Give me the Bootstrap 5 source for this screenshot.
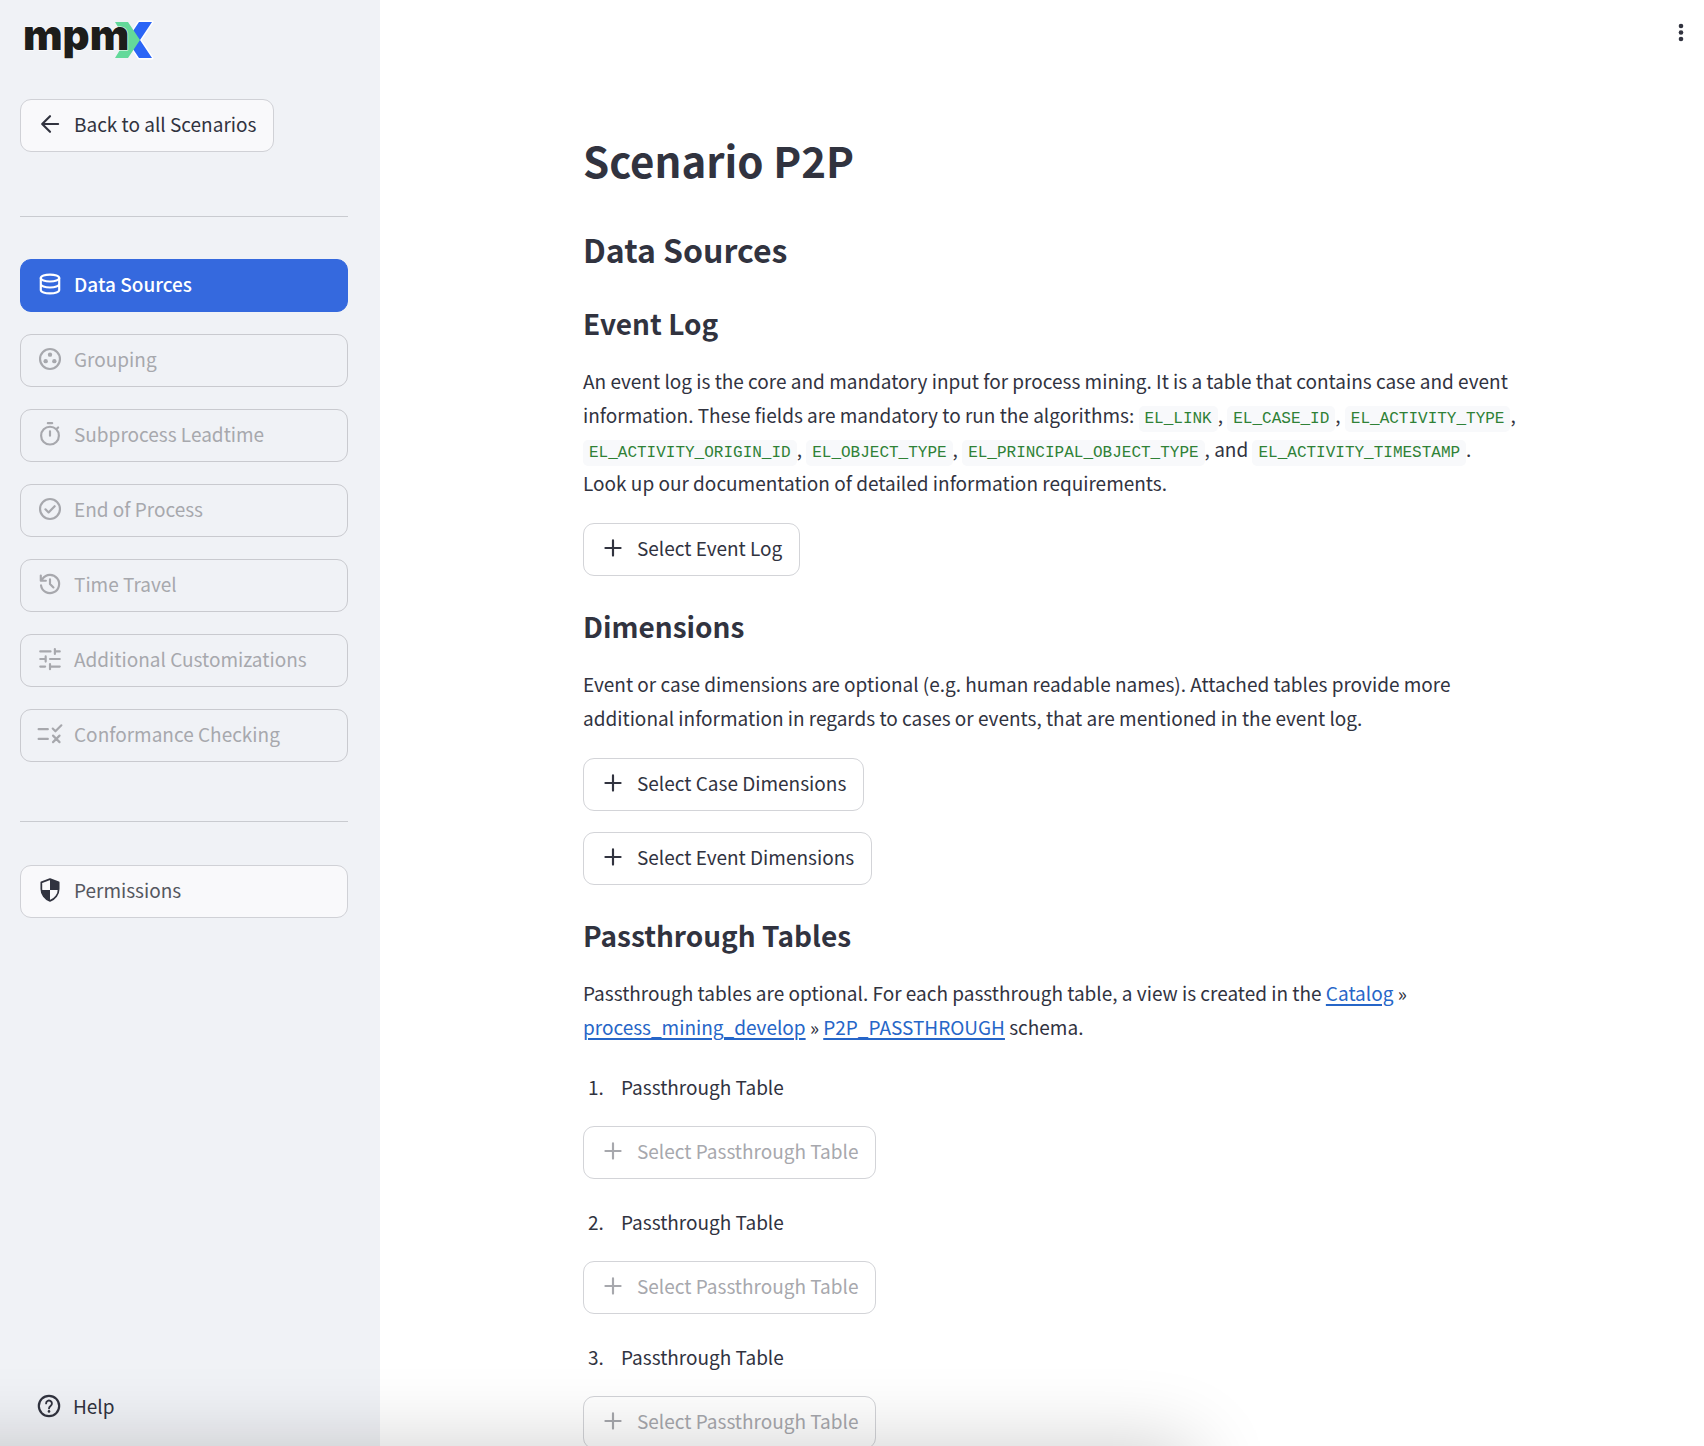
<!DOCTYPE html>
<html lang="en">
<head>
<meta charset="utf-8">
<meta name="viewport" content="width=device-width, initial-scale=1">
<title>mpmX – Scenario P2P</title>
<link href="https://cdn.jsdelivr.net/npm/bootstrap@5.3.0/dist/css/bootstrap.min.css" rel="stylesheet">
<style>
  :root { --ink: #31333f; --muted: #a7a8ad; --line: #d3d4d8; --side: #f0f2f6; }
  body { font-family: "Noto Sans CJK SC", "Noto Sans", sans-serif; font-size: 19px; line-height: 34px; color: var(--ink); }
  .side-panel { width: 380px; background: var(--side); padding: 18px 32px 23px 20px; }
  .logo { margin-bottom: 37px; overflow: visible; }
  .logo text { font: 900 42px Inter, sans-serif; fill: #1d1d1b; }
  .side-rule { border: 0; border-top: 1px solid #c9cbd0; opacity: 1; margin: 0; }
  .rule-top { margin-top: 64px; }
  .rule-bottom { margin-bottom: 43px; }
  .steps { gap: 22px; margin: 42px 0 59px; }
  .tool-btn {
    --bs-btn-color: var(--ink); --bs-btn-bg: #fff; --bs-btn-border-color: var(--line);
    --bs-btn-hover-color: #3569de; --bs-btn-hover-bg: #fff; --bs-btn-hover-border-color: #3569de;
    --bs-btn-disabled-color: var(--muted); --bs-btn-disabled-bg: transparent; --bs-btn-disabled-border-color: var(--line);
    --bs-btn-disabled-opacity: 1; --bs-btn-border-radius: 11px;
    --bs-btn-font-size: 19px; --bs-btn-line-height: 28px;
    display: flex; align-items: center; gap: 11px; height: 53px; padding: 0 17px 3px 16px; text-align: left;
  }
  .side-panel .tool-btn { --bs-btn-bg: #f9f9fb; --bs-btn-border-color: #d0d1d6; --bs-btn-disabled-border-color: #c9cacf; }
  .side-panel .tool-btn.current { --bs-btn-color: #fff; --bs-btn-bg: #3569de; --bs-btn-border-color: #3569de; font-weight: 500; }
  .side-panel .tool-btn.faded { --bs-btn-color: #55575f; }
  .faded svg { color: var(--ink); }
  .ico { width: 26px; height: 26px; flex: none; fill: none; stroke: currentColor; stroke-width: 2; stroke-linecap: round; stroke-linejoin: round; }
  .solid { fill: currentColor; stroke: none; }
  .help-link { gap: 11px; padding-left: 16px; color: var(--ink); }
  .content-pane { overflow-y: auto; scrollbar-width: none; padding: 132px 0 60px 203px; }
  .content-pane::-webkit-scrollbar { display: none; }
  .content-body { max-width: 944px; }
  h1, h2, h3 { font-weight: 600; color: var(--ink); margin: 0; }
  h1 { font-size: 42px; line-height: 56px; }
  h2 { font-size: 32px; line-height: 42px; margin-top: 40px; }
  h3 { font-size: 28px; line-height: 36px; margin: 32px 0 23px; }
  h2 + h3 { margin-top: 35px; }
  p { margin-bottom: 23px; }
  code { font-family: "Liberation Mono", monospace; font-size: 16px; line-height: 1; color: #2f8136; background: #f8f9fb; border-radius: 5px; padding: 4px 6px; }
  .content-body a { color: #2666c8; text-decoration-thickness: 2px; text-underline-offset: 3px; }
  .stack { gap: 21px; }
  .passthrough { padding-left: 25px; margin: 26px 0 22px; }
  .passthrough li { padding-left: 13px; }
  .menu-btn { top: 18px; right: 9px; width: 28px; height: 28px; color: var(--ink); }
  .edge-shade { left: 0; top: 100%; width: 70vw; height: 200px; margin-left: -100px; padding-right: 100px; box-sizing: content-box; box-shadow: 0 0 80px rgba(0,0,0,.2); pointer-events: none; }
</style>
<script src="https://cdn.jsdelivr.net/npm/bootstrap@5.3.0/dist/js/bootstrap.bundle.min.js" defer></script>
</head>
<body>
<svg class="d-none">
  <symbol id="plus" viewBox="0 0 24 24"><path d="M12 5v14M5 12h14"/></symbol>
</svg>
<div class="d-flex vh-100 overflow-hidden">
  <aside class="side-panel d-flex flex-column flex-shrink-0">
    <svg class="logo flex-shrink-0" width="140" height="44" viewBox="20 18 140 44" role="img" aria-label="mpmX">
      <g stroke="#fff" stroke-width="3" stroke-linejoin="round" paint-order="stroke">
        <path fill="#2b65f6" d="M139 22h13l-12 18 12 18h-13l-10-15v-6z"/>
        <path fill="#63d99a" stroke="none" d="M115 22h13l12 18-12 18h-13l11-18z"/>
        <text x="23" y="50" stroke-width="1">mpm</text>
      </g>
    </svg>
    <button type="button" class="btn tool-btn align-self-start">
      <svg class="ico" viewBox="0 0 24 24"><path d="M19.500 12H5M12 4.800L4.800 12l7.200 7.200"/></svg>Back to all Scenarios
    </button>
    <hr class="side-rule rule-top">
    <nav class="steps d-flex flex-column" aria-label="Scenario steps">
      <button type="button" class="btn tool-btn current"><svg class="ico" viewBox="0 0 24 24"><ellipse cx="12" cy="6.500" rx="8.500" ry="3.200"/><path d="M3.500 6.500v11c0 1.800 3.800 3.200 8.500 3.200s8.500-1.400 8.500-3.200v-11M3.500 12c0 1.800 3.800 3.200 8.500 3.200s8.500-1.400 8.500-3.200"/></svg>Data Sources</button>
      <button type="button" class="btn tool-btn" disabled><svg class="ico" viewBox="0 0 24 24"><circle cx="12" cy="12" r="9.200"/><g class="solid"><circle cx="12" cy="8" r="2"/><circle cx="8" cy="14" r="2"/><circle cx="16" cy="14" r="2"/></g></svg>Grouping</button>
      <button type="button" class="btn tool-btn" disabled><svg class="ico" viewBox="0 0 24 24"><circle cx="12" cy="13.500" r="8.200"/><path d="M10 2h4M12 9.500v4M18.500 7l1-1"/></svg>Subprocess Leadtime</button>
      <button type="button" class="btn tool-btn" disabled><svg class="ico" viewBox="0 0 24 24"><circle cx="12" cy="12" r="9.200"/><path d="M7.800 12.300l2.900 2.900 5.600-5.800"/></svg>End of Process</button>
      <button type="button" class="btn tool-btn" disabled><svg class="ico" viewBox="0 0 24 24"><path d="M3.700 13.200a8.400 8.400 0 1 0 1.500-6.100L3.800 8.800M3.500 4.200v4.800h4.700M12 7.800V12l3.200 3.200"/></svg>Time Travel</button>
      <button type="button" class="btn tool-btn" disabled><svg class="ico" viewBox="0 0 24 24"><path d="M3 5h9.500M16.500 2.800v4.600M16.500 5H21M3 12h5M8 9.600v4.800M12 12h9M3 19h4.500M12 16.600v4.800M12 19h9"/></svg>Additional Customizations</button>
      <button type="button" class="btn tool-btn" disabled><svg class="ico" viewBox="0 0 24 24"><path d="M1.500 7.500h8.500M1.500 16.500h8.500M14.500 7l2.500 2.500 5.500-5.500M14.800 13.500l6 6M20.800 13.500l-6 6"/></svg>Conformance Checking</button>
    </nav>
    <hr class="side-rule rule-bottom">
    <button type="button" class="btn tool-btn faded"><svg class="ico" viewBox="0 0 24 24"><path d="M12 2l8 3v6c0 5-3.300 9.600-8 11-4.700-1.400-8-6-8-11V5z" stroke-width="1.600"/><path class="solid" d="M12 2l8 3v7h-8zM4 12h8v10c-4.300-1.300-7.500-5.400-8-10z"/></svg>Permissions</button>
    <a href="#help" class="help-link d-flex align-items-center mt-auto text-decoration-none"><svg class="ico" viewBox="0 0 24 24"><circle cx="12" cy="12" r="9.400"/><path d="M9.300 9.600a2.700 2.700 0 1 1 4.300 2.200c-1 .8-1.600 1.200-1.600 2.400" stroke-width="1.700"/><circle class="solid" cx="12" cy="17" r="1.200"/></svg>Help</a>
  </aside>

  <main class="content-pane flex-grow-1 position-relative">
    <button type="button" class="menu-btn btn p-0 border-0 position-absolute" aria-label="Menu"><svg class="d-block" width="28" height="28" viewBox="0 0 28 28" fill="currentColor"><circle cx="14" cy="8" r="2.300"/><circle cx="14" cy="14.500" r="2.300"/><circle cx="14" cy="21" r="2.300"/></svg></button>
    <div class="content-body">
      <h1>Scenario P2P</h1>
      <h2>Data Sources</h2>

      <h3>Event Log</h3>
      <p>An event log is the core and mandatory input for process mining. It is a table that contains case and event information. These fields are mandatory to run the algorithms: <code>EL_LINK</code>, <code>EL_CASE_ID</code>, <code>EL_ACTIVITY_TYPE</code>, <code>EL_ACTIVITY_ORIGIN_ID</code>, <code>EL_OBJECT_TYPE</code>, <code>EL_PRINCIPAL_OBJECT_TYPE</code>, and <code>EL_ACTIVITY_TIMESTAMP</code>.<br>Look up our documentation of detailed information requirements.</p>
      <button type="button" class="btn tool-btn"><svg class="ico"><use href="#plus"/></svg>Select Event Log</button>

      <h3>Dimensions</h3>
      <p>Event or case dimensions are optional (e.g. human readable names). Attached tables provide more additional information in regards to cases or events, that are mentioned in the event log.</p>
      <div class="stack d-flex flex-column align-items-start">
        <button type="button" class="btn tool-btn"><svg class="ico"><use href="#plus"/></svg>Select Case Dimensions</button>
        <button type="button" class="btn tool-btn"><svg class="ico"><use href="#plus"/></svg>Select Event Dimensions</button>
      </div>

      <h3>Passthrough Tables</h3>
      <p>Passthrough tables are optional. For each passthrough table, a view is created in the <a href="#catalog">Catalog</a> » <a href="#develop">process_mining_develop</a> » <a href="#passthrough">P2P_PASSTHROUGH</a> schema.</p>
      <ol class="passthrough"><li>Passthrough Table</li></ol>
      <button type="button" class="btn tool-btn" disabled><svg class="ico"><use href="#plus"/></svg>Select Passthrough Table</button>
      <ol class="passthrough" start="2"><li>Passthrough Table</li></ol>
      <button type="button" class="btn tool-btn" disabled><svg class="ico"><use href="#plus"/></svg>Select Passthrough Table</button>
      <ol class="passthrough" start="3"><li>Passthrough Table</li></ol>
      <button type="button" class="btn tool-btn" disabled><svg class="ico"><use href="#plus"/></svg>Select Passthrough Table</button>
    </div>
  </main>
</div>
<div class="edge-shade position-fixed"></div>
</body>
</html>
